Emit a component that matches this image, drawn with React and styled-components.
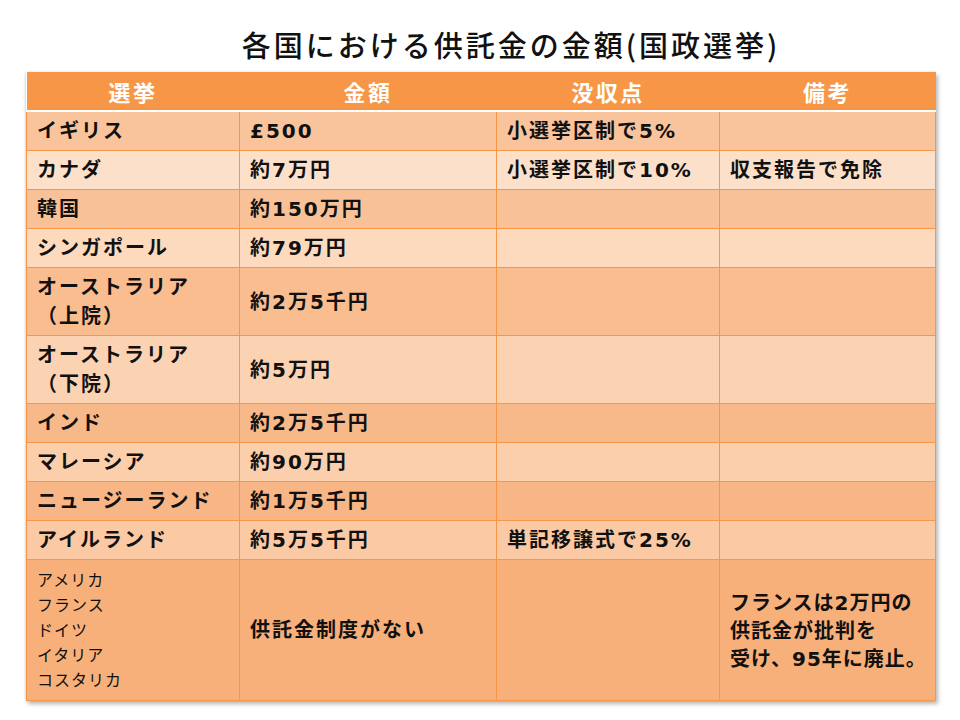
import React from 'react';
import styled, { createGlobalStyle } from 'styled-components';

const rows = [
  { name: ['イギリス'], amount: '£500', forfeit: '小選挙区制で5%', note: '', bg: '#f9c49c' },
  { name: ['カナダ'], amount: '約7万円', forfeit: '小選挙区制で10%', note: '収支報告で免除', bg: '#fde0c9' },
  { name: ['韓国'], amount: '約150万円', forfeit: '', note: '', bg: '#f9c197' },
  { name: ['シンガポール'], amount: '約79万円', forfeit: '', note: '', bg: '#fdd9bd' },
  { name: ['オーストラリア', '（上院）'], amount: '約2万5千円', forfeit: '', note: '', bg: '#f9bd90' },
  { name: ['オーストラリア', '（下院）'], amount: '約5万円', forfeit: '', note: '', bg: '#fcd3b2' },
  { name: ['インド'], amount: '約2万5千円', forfeit: '', note: '', bg: '#f8b98a' },
  { name: ['マレーシア'], amount: '約90万円', forfeit: '', note: '', bg: '#fccfac' },
  { name: ['ニュージーランド'], amount: '約1万5千円', forfeit: '', note: '', bg: '#f8b686' },
  { name: ['アイルランド'], amount: '約5万5千円', forfeit: '単記移譲式で25%', note: '', bg: '#fbcaa4' },
];

const others = ['アメリカ', 'フランス', 'ドイツ', 'イタリア', 'コスタリカ'];

const GlobalStyle = createGlobalStyle`
  html, body {
    margin: 0;
    padding: 0;
    background: #ffffff;
  }
  body {
    width: 960px;
    height: 720px;
    overflow: hidden;
    font-family: "Noto Sans CJK JP", "Noto Sans", sans-serif;
  }
`;

const Slide = styled.div`
  width: 960px;
  height: 720px;
  display: flex;
  flex-direction: column;
  align-items: flex-start;
`;

const Title = styled.h1`
  margin: 24px 0 0 0;
  align-self: stretch;
  padding-left: 62px;
  text-align: center;
  font-size: 29px;
  font-weight: 500;
  letter-spacing: 3px;
  line-height: 40px;
  color: #111;
`;

const Table = styled.table`
  margin: 8px 0 0 26px;
  width: 909px;
  border-collapse: collapse;
  table-layout: fixed;
  box-shadow: 2px 3px 4px rgba(0, 0, 0, 0.28), -1px 0 2px rgba(0, 0, 0, 0.12);
`;

const HeadCell = styled.th`
  background: #f79646;
  color: #ffffff;
  height: 38px;
  padding: 0;
  font-size: 22px;
  font-weight: 700;
  letter-spacing: 2.5px;
  text-align: center;
  border-bottom: 2px solid #ffffff;
`;

const Row = styled.tr`
  background: ${(p) => p.$bg};
`;

const Cell = styled.td`
  border: 1px solid #f79646;
  padding: 5px 8px 4px 10px;
  font-family: "DejaVu Sans", "Noto Sans CJK JP", sans-serif;
  font-size: 20px;
  font-weight: 700;
  line-height: 29px;
  letter-spacing: 2px;
  color: #111;
  vertical-align: middle;
  white-space: nowrap;
`;

const ListCell = styled(Cell)`
  height: 128px;
  font-size: 16px;
  font-weight: 400;
  line-height: 25px;
  letter-spacing: 1px;
  padding-top: 6px;
  padding-bottom: 6px;
`;

const NoteCell = styled(Cell)`
  line-height: 28px;
  letter-spacing: 1px;
  padding-right: 0;
`;

const Line = styled.div``;

export default function App() {
  return (
    <>
      <GlobalStyle />
      <Slide>
        <Title>各国における供託金の金額(国政選挙)</Title>
        <Table>
          <colgroup>
            <col style={{ width: 213 }} />
            <col style={{ width: 257 }} />
            <col style={{ width: 223 }} />
            <col style={{ width: 216 }} />
          </colgroup>
          <thead>
            <tr>
              <HeadCell>選挙</HeadCell>
              <HeadCell>金額</HeadCell>
              <HeadCell>没収点</HeadCell>
              <HeadCell>備考</HeadCell>
            </tr>
          </thead>
          <tbody>
            {rows.map((r, i) => (
              <Row key={i} $bg={r.bg}>
                <Cell>
                  {r.name.map((n) => (
                    <Line key={n}>{n}</Line>
                  ))}
                </Cell>
                <Cell>{r.amount}</Cell>
                <Cell>{r.forfeit}</Cell>
                <Cell>{r.note}</Cell>
              </Row>
            ))}
            <Row $bg="#f8b07a">
              <ListCell>
                {others.map((n) => (
                  <Line key={n}>{n}</Line>
                ))}
              </ListCell>
              <Cell>供託金制度がない</Cell>
              <Cell />
              <NoteCell>
                <Line>フランスは2万円の</Line>
                <Line>供託金が批判を</Line>
                <Line>受け、95年に廃止。</Line>
              </NoteCell>
            </Row>
          </tbody>
        </Table>
      </Slide>
    </>
  );
}
